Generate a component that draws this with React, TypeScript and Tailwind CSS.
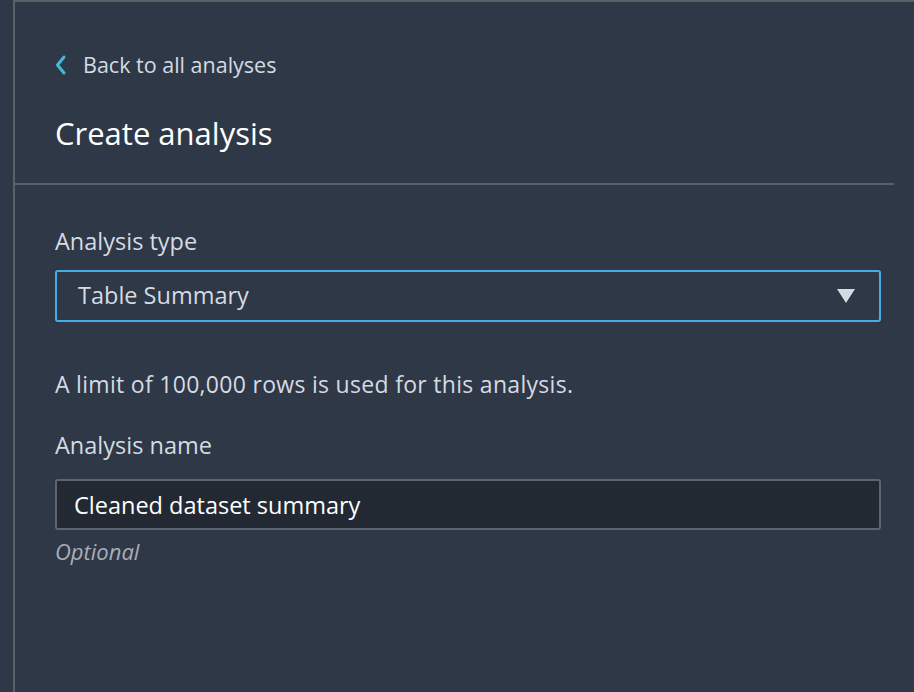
import React, { useState } from 'react';

const font = { fontFamily: '"Open Sans", "Liberation Sans", sans-serif' };

const ChevronLeft: React.FC = () => (
  <svg width="13" height="22" viewBox="0 0 13 22" fill="none">
    <path d="M10 3 L3.5 11 L10 19" stroke="#44b9d6" strokeWidth="3" strokeLinecap="round" strokeLinejoin="round" />
  </svg>
);

const App: React.FC = () => {
  const [name, setName] = useState('Cleaned dataset summary');

  return (
    <div className="w-[914px] h-[692px] bg-[#2f3846] flex overflow-hidden" style={font}>
      <div className="w-[13px] shrink-0 bg-[#2f3846]" />
      <div className="flex-1 border-l-2 border-t-2 border-[#5b5f66] flex flex-col">
        <div className="pl-[39px] pr-[21px]">
          <a className="flex items-center gap-[16px] mt-[50px] h-[26px] text-[#d5dbe3] text-[21.5px] cursor-pointer">
            <ChevronLeft />
            <span>Back to all analyses</span>
          </a>
          <h1 className="mt-[37px] pl-[1px] text-[31px] leading-[36px] text-white font-medium">Create analysis</h1>
        </div>
        <div className="mt-[32px] mr-[20px] h-[2px] bg-[#5b5f66]" />
        <div className="pl-[40px] pr-[33px] flex flex-col">
          <label className="mt-[41px] text-[23.5px] leading-[30px] text-[#d5dbe3]">Analysis type</label>
          <div className="mt-[14px] h-[52px] rounded-[3px] border-2 border-[#45ade3] flex items-center justify-between pl-[21px] pr-[24px]">
            <span className="text-[23.5px] text-[#d5dbe3]">Table Summary</span>
            <svg width="18" height="14" viewBox="0 0 18 14">
              <path d="M0 0 H18 L9 14 Z" fill="#d5dbe3" />
            </svg>
          </div>
          <p className="mt-[47px] text-[23px] leading-[30px] text-[#d5dbe3] tracking-[0.3px]">A limit of 100,000 rows is used for this analysis.</p>
          <label className="mt-[31px] text-[23.5px] leading-[30px] text-[#d5dbe3]">Analysis name</label>
          <input
            value={name}
            onChange={(e) => setName(e.target.value)}
            className="mt-[19px] h-[51px] rounded-[3px] border-2 border-[#5f656e] bg-[#222933] pl-[17px] text-[23.5px] text-white outline-none"
          />
          <span className="mt-[7px] text-[22px] leading-[28px] italic text-[#a8aeb6]">Optional</span>
        </div>
      </div>
    </div>
  );
};

export default App;
